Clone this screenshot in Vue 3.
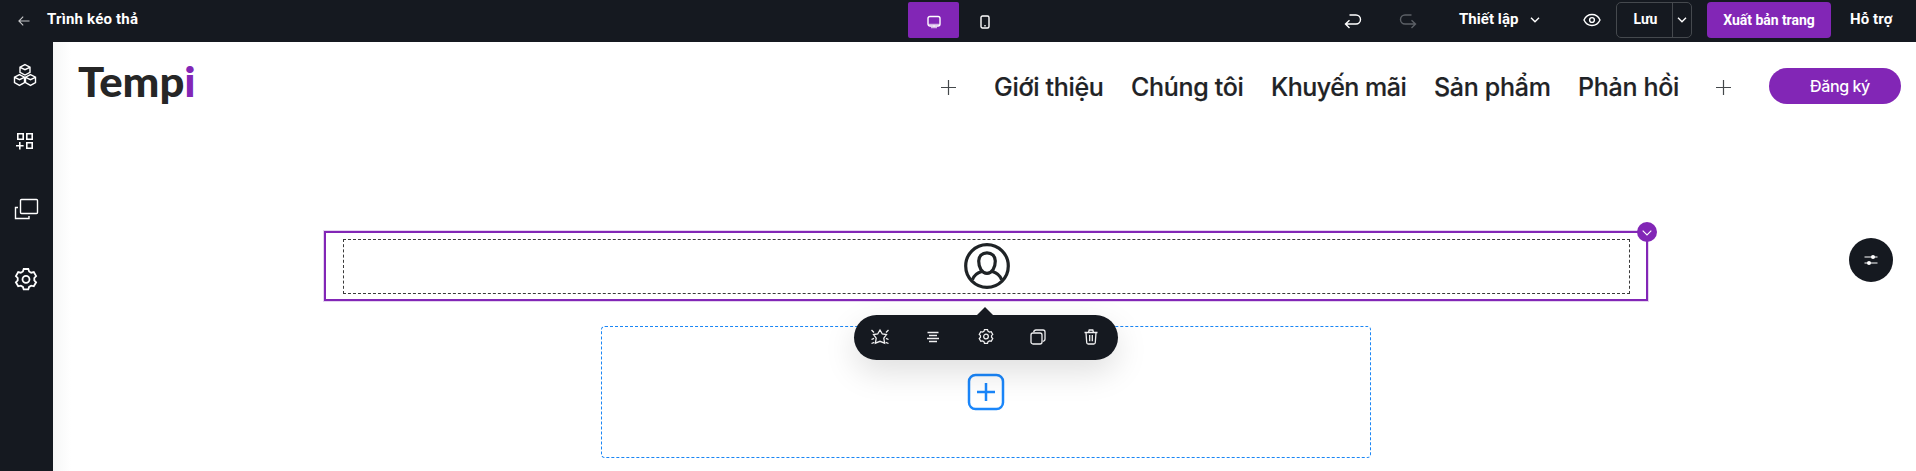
<script setup>
const navItems = [
  { label: 'Giới thiệu', cls: 'n1' },
  { label: 'Chúng tôi', cls: 'n2' },
  { label: 'Khuyến mãi', cls: 'n3' },
  { label: 'Sản phẩm', cls: 'n4' },
  { label: 'Phản hồi', cls: 'n5' },
]
const gear =
  'M8.9 3.500 9.700 1h4.600l.8 2.500 2.100 1.200 2.600-.6 2.300 4-1.800 1.900v2.400l1.800 1.900-2.300 4-2.600-.6-2.100 1.200-.8 2.500H9.700l-.8-2.500-2.100-1.200-2.600.6-2.300-4 1.800-1.900V10L1.900 8.100l2.300-4 2.600.6z'
</script>

<template>
  <div class="app">
    <header class="topbar">
      <div class="left">
        <svg class="back" width="12" height="12" viewBox="0 0 12 12"><path d="M11.500 6H1M5.200 1.700.9 6l4.300 4.300" /></svg>
        <span class="title">Trình kéo thả</span>
      </div>
      <div class="devices">
        <button class="device on">
          <svg width="14" height="14" viewBox="0 0 14 14"><rect x="1" y="1.500" width="12" height="9.500" rx="2" /><path d="M1.500 9.500h11M4 12.500h6M7 10v2" opacity=".65" /></svg>
        </button>
        <button class="device">
          <svg width="10" height="14" viewBox="0 0 10 14"><rect x="1" y="1" width="8" height="12" rx="1.500" /><path d="M5 10v1.500" /></svg>
        </button>
      </div>
      <div class="right">
        <svg class="undo" width="18" height="16" viewBox="0 0 18 16"><path d="M5.500 2H12a4.400 4.400 0 0 1 0 9H1.800M5.500 7.300 1.500 11l4 4" /></svg>
        <svg class="redo" width="18" height="16" viewBox="0 0 18 16"><path d="M12.500 2H6a4.400 4.400 0 0 0 0 9h10.200M12.500 7.300l4 3.700-4 4" /></svg>
        <span class="setup">Thiết lập</span>
        <svg class="chev" width="10" height="6" viewBox="0 0 10 6"><path d="m1 .7 4 4 4-4" /></svg>
        <svg class="eye" width="18" height="14" viewBox="0 0 18 14"><path d="M1 7c1.600-3.500 4.500-5.500 8-5.500s6.400 2 8 5.500c-1.600 3.500-4.500 5.500-8 5.500S2.600 10.500 1 7z" /><circle cx="9" cy="7" r="2.400" /></svg>
        <div class="save">
          <span class="save-label">Lưu</span>
          <span class="save-more"><svg width="10" height="6" viewBox="0 0 10 6"><path d="m1 .7 4 4 4-4" /></svg></span>
        </div>
        <button class="publish">Xuất bản trang</button>
        <span class="help">Hỗ trợ</span>
      </div>
    </header>

    <div class="body">
      <aside class="side">
        <svg width="24" height="24" viewBox="0 0 24 24">
          <path d="m12 1.600 5 2.600v5.200l-5 2.600-5-2.600V4.200zM7.200 4.300 12 6.600l4.800-2.300" />
          <path d="m6.500 11.600 5 2.600v5.400l-5 2.800-5-2.800v-5.400zM1.700 14.300l4.800 2.300 4.800-2.300" />
          <path d="m17.500 11.600 5 2.600v5.400l-5 2.800-5-2.800v-5.400zM12.700 14.300l4.800 2.300 4.800-2.300" />
        </svg>
        <svg width="18" height="18" viewBox="0 0 18 18" class="s2"><path d="M1.800 1.800h5.400v5.400H1.800zM10.800 1.800h5.400v5.400h-5.400zM10.800 10.800h5.400v5.400h-5.400zM3.800 10v7.500M0 13.700h7.600" /></svg>
        <svg width="26" height="22" viewBox="0 0 26 22" class="s3"><rect x="6.500" y="1.500" width="17" height="14" rx="1" /><path d="M4 9.500H1.500v11H15V18" /></svg>
        <svg width="24" height="24" viewBox="0 0 24 24" class="s4"><path :d="gear" /><circle cx="12" cy="11.300" r="3.500" /></svg>
      </aside>

      <main class="canvas">
        <div class="site-head">
          <div class="logo">Temp<span>i</span></div>
          <nav class="nav">
            <svg class="plus" width="15" height="15" viewBox="0 0 15 15"><path d="M7.500 0v15M0 7.500h15" /></svg>
            <a v-for="n in navItems" :key="n.label" :class="n.cls">{{ n.label }}</a>
            <svg class="plus last" width="15" height="15" viewBox="0 0 15 15"><path d="M7.500 0v15M0 7.500h15" /></svg>
          </nav>
          <button class="signup">Đăng ký</button>
        </div>

        <section class="selected">
          <div class="inner">
            <svg width="46" height="46" viewBox="0 0 46 46"><circle cx="23" cy="23" r="21.300" /><path d="M23 9.800c-5 0-8.300 3.400-8.300 8.200 0 6.500 3.200 12.300 8.300 12.300s8.300-5.800 8.300-12.300c0-4.800-3.300-8.200-8.300-8.200zM17.500 28.500c-4 1.200-7.600 4-9.100 8.300M28.500 28.500c4 1.200 7.600 4 9.100 8.300" /></svg>
          </div>
          <span class="badge"><svg width="10" height="6" viewBox="0 0 10 6"><path d="m.7.700 4.300 4.300L9.300.7" /></svg></span>
          <div class="tools">
            <svg width="20" height="18" viewBox="0 0 20 18"><path d="m10 2 2.300 4 4.200.6-2.700 3.600.8 5-4.600-1.900-4.600 1.900.8-5-2.700-3.600L7.700 6zM1.500 2 4 4.500M18.500 2 16 4.500M1.500 11.500 4 10.300M18.500 11.500 16 10.300M1.500 15.500l2.800-1.200M18.500 15.500l-2.800-1.200" /></svg>
            <svg width="14" height="12" viewBox="0 0 14 12"><path d="M1.500 1.500h11M3 4.500h8M1 7.500h12M3 10.500h8" /></svg>
            <svg width="16" height="16" viewBox="0 0 24 24" class="tg"><path :d="gear" /><circle cx="12" cy="11.300" r="3.500" /></svg>
            <svg width="16" height="16" viewBox="0 0 16 16"><rect x="1" y="4" width="11" height="11" rx="2" /><path d="M3.700 3.200Q4 1 6 1h7q2 0 2 2v7q0 2-2.200 2.300" /></svg>
            <svg width="14" height="16" viewBox="0 0 14 16"><path d="M.5 3.500h13M4.500 3.500 5.200 1h3.600l.7 2.500M2 3.500l.7 10q.1 1.500 1.500 1.500h5.600q1.400 0 1.500-1.500l.7-10M5.700 6v6.200M8.300 6v6.200" /></svg>
          </div>
        </section>

        <section class="drop">
          <svg width="38" height="38" viewBox="0 0 38 38"><rect x="2" y="2" width="34" height="34" rx="6.500" /><path d="M19 10v18M10 19h18" /></svg>
        </section>

        <button class="float">
          <svg width="14" height="12" viewBox="0 0 14 12"><path d="M.5 3h13M.5 9h13" /><circle cx="9" cy="3" r="2" /><circle cx="5" cy="9" r="2" /></svg>
        </button>
      </main>
    </div>
  </div>
</template>

<style>
body { margin: 0; overflow: hidden; }
</style>

<style scoped>
.app { width: 1916px; height: 471px; overflow: hidden; background: #fff; font-family: Roboto, "Liberation Sans", sans-serif; }
svg { display: block; flex: none; fill: none; stroke: #fff; stroke-width: 1.4; }
button { border: 0; padding: 0; margin: 0; font-family: inherit; color: #fff; display: flex; align-items: center; justify-content: center; }
a, span { white-space: nowrap; }

.topbar { height: 42px; background: #151920; display: grid; grid-template-columns: 908px 1fr auto; color: #fff; font-weight: 700; font-size: 15px; }
.left { display: flex; align-items: center; height: 38px; }
.back { margin: 3px 17px 0 18px; stroke: #c6c7c9; stroke-width: 1.1; }
.title { letter-spacing: .2px; }
.devices { display: flex; padding-top: 2px; }
.device { width: 51px; height: 36px; background: none; border-radius: 2px; }
.device svg { margin: 4px 0 0 0; }
.device.on { background: #8226b6; }
.right { display: flex; height: 40px; align-items: center; }
.right .undo { margin: 1px 37px 0 0; }
.right .redo { margin: 1px 42px 0 0; stroke: #5c6066; }
.setup { width: 62px; margin-top: -2px; letter-spacing: .05px; }
.chev { margin: 0 43px 0 9px; }
.save { box-sizing: border-box; width: 76px; height: 36px; margin: 0 15px 0 15px; border: 1px solid #45494e; border-radius: 5px; display: flex; font-size: 14px; }
.save-label { width: 56px; text-align: center; line-height: 33px; box-sizing: border-box; border-right: 1px solid #45494e; padding-left: 2px; }
.save-more { flex: 1; display: flex; align-items: center; justify-content: center; }
.publish { width: 124px; height: 36px; background: #8226b6; border-radius: 4px; font-size: 14px; font-weight: 700; letter-spacing: -.05px; }
.help { width: 45px; margin: -3px 21px 0 19px; letter-spacing: .1px; }

.body { display: flex; height: 429px; }
.side { width: 53px; background: #151920; display: flex; flex-direction: column; box-sizing: border-box; padding: 21px 0 0 13px; }
.s2 { margin: 45px 0 0 3px; stroke-width: 1.6; }
.s3 { margin: 48px 0 0 1px; }
.s4 { margin: 48px 0 0 1px; stroke-width: 1.8; }

.canvas { flex: 1; position: relative; background: linear-gradient(90deg, #f6f7f7 0, #fff 18px); display: flex; flex-direction: column; }
.site-head { display: flex; height: 189px; align-items: flex-start; }
.logo { width: 841px; margin: 17px 0 0 25px; font: 900 41px/46px Lato, sans-serif; color: #262626; transform: scaleX(1.065); transform-origin: 0 0; }
.logo span { color: #8226b6; }
.nav { display: flex; align-items: center; height: 32px; margin-top: 29px; font: 500 25px/32px Inter, sans-serif; letter-spacing: -.3px; color: #1f2326; -webkit-text-stroke: .2px #1f2326; }
.plus { stroke: #44484b; stroke-width: 1.2; margin: 0 38px 0 22px; }
.nav a { margin-right: 28px; }
.nav .n1 { width: 109px; }
.nav .n2 { width: 112px; }
.nav .n3 { width: 135px; letter-spacing: -.5px; }
.nav .n4 { width: 116px; }
.nav .n5 { width: 100px; }
.nav .last { margin: 0 38px 0 10px; }
.signup { width: 132px; height: 36px; margin-top: 26px; border-radius: 18px; background: #8226b6; font: 500 16px/20px Inter, sans-serif; letter-spacing: -.4px; box-sizing: border-box; padding: 0 0 1px 10px; }

.selected { position: relative; box-sizing: border-box; width: 1324px; height: 70px; margin-left: 271px; border: 2px solid #8226b6; box-shadow: 0 0 0 1px #e5d3f0; padding: 6px 17px; }
.inner { box-sizing: border-box; height: 55px; width: 1287px; border: 1px dashed #3a3a3a; display: flex; align-items: center; justify-content: center; }
.inner svg { stroke: #1f2326; stroke-width: 3.2; margin-top: -1px; }
.badge { position: absolute; right: -11px; top: -11px; width: 20px; height: 20px; border-radius: 50%; background: #8226b6; display: flex; align-items: center; justify-content: center; }
.badge svg { stroke-width: 1.1; margin-top: 2px; }
.tools { position: absolute; z-index: 2; left: 528px; top: 82px; width: 264px; height: 45px; border-radius: 23px; background: #151920; box-shadow: 0 12px 32px rgba(0, 0, 0, .13); display: grid; grid-template-columns: repeat(5, 52.700px); align-items: center; justify-items: center; }
.tools::before { content: ""; position: absolute; left: 123px; top: -8px; border: 8px solid transparent; border-top: 0; border-bottom-color: #151920; }
.tools svg { stroke: #f0f0f1; stroke-width: 1.3; margin-top: -1px; }
.tools .tg { stroke-width: 1.9; }
.drop { box-sizing: border-box; width: 770px; height: 132px; margin: 25px 0 0 548px; border: 1px dashed #1a86f5; border-radius: 4px; display: flex; align-items: center; justify-content: center; }
.drop svg { stroke: #1a86fa; stroke-width: 2.5; }
.float { position: absolute; right: 23px; top: 196px; width: 44px; height: 44px; border-radius: 50%; background: #151920; }
.float svg { stroke-width: 1.2; margin: -1px 1px 0 0; }
.float circle { fill: #fff; stroke: none; }
</style>
